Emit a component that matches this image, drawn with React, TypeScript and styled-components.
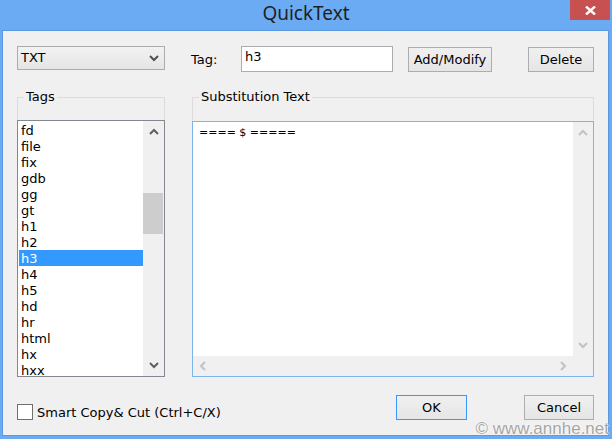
import { createGlobalStyle } from "styled-components";
import styled from "styled-components";

const GlobalStyle = createGlobalStyle`
  html, body {
    margin: 0;
    padding: 0;
    background: #ffffff;
  }
  * {
    box-sizing: border-box;
  }
`;

const uiFont = `"DejaVu Sans", Verdana, sans-serif`;

const Frame = styled.div`
  position: relative;
  width: 612px;
  height: 439px;
  background: #6babf4;
  display: flex;
  flex-direction: column;
  overflow: hidden;
`;

const TitleBar = styled.div`
  height: 30px;
  display: grid;
  grid-template-columns: 1fr auto 1fr;
  align-items: start;
`;

const Title = styled.div`
  grid-column: 2;
  font-family: "Noto Sans", "Open Sans", sans-serif;
  font-size: 19px;
  line-height: 26px;
  color: #1f1f1f;
`;

const CloseButton = styled.div`
  grid-column: 3;
  justify-self: end;
  width: 40px;
  height: 20px;
  margin-right: 2px;
  background: #c75050;
  display: flex;
  align-items: center;
  justify-content: center;
`;

const Client = styled.div`
  flex: 1;
  margin: 0 3px 3px 2px;
  border: 1px solid #5a98e2;
  background: #f0f0f0;
  padding: 15px 14px 0 14px;
  display: flex;
  flex-direction: column;
  font-family: ${uiFont};
  font-size: 13px;
  color: #000;
`;

const TopRow = styled.div`
  height: 26px;
  display: flex;
  align-items: center;
`;

const Combo = styled.div`
  width: 148px;
  height: 24px;
  align-self: flex-start;
  border: 1px solid #acacac;
  background: linear-gradient(#f2f2f2, #e5e5e5);
  display: flex;
  align-items: center;
  justify-content: space-between;
  padding: 0 5px 0 3px;
  line-height: 16px;
`;

const FieldLabel = styled.div`
  width: 50px;
  margin-left: 26px;
`;

const TextInput = styled.div`
  width: 152px;
  height: 26px;
  border: 1px solid #abadb3;
  background: #fff;
  padding: 2px 0 0 3px;
  line-height: 16px;
`;

const Button = styled.div<{ $w: number; $gap: number; $default?: boolean }>`
  width: ${(p) => p.$w}px;
  height: 25px;
  margin-left: ${(p) => p.$gap}px;
  border: 1px solid ${(p) => (p.$default ? "#3399ff" : "#adadad")};
  background: linear-gradient(#f0f0f0, #e5e5e5);
  display: flex;
  align-items: center;
  justify-content: center;
  padding-top: 1px;
  line-height: 16px;
`;

const GroupsRow = styled.div`
  margin-top: 17px;
  display: flex;
`;

const Group = styled.fieldset<{ $w: number; $gap?: number }>`
  width: ${(p) => p.$w}px;
  margin: 0 0 0 ${(p) => p.$gap ?? 0}px;
  padding: 0;
  min-width: 0;
  border: 1px solid #dcdcdc;
  border-bottom: none;
`;

const Legend = styled.legend`
  margin-left: 6px;
  padding: 0 2px;
  line-height: 16px;
`;

const ListBox = styled.div`
  margin: 15px -1px 0 -1px;
  height: 257px;
  border: 1px solid #828790;
  background: #fff;
  display: flex;
`;

const Items = styled.div`
  flex: 1;
  padding: 1px 0 0 1px;
  overflow: hidden;
`;

const Item = styled.div<{ $selected?: boolean }>`
  height: 16px;
  line-height: 17px;
  padding-left: 2px;
  background: ${(p) => (p.$selected ? "#3399ff" : "transparent")};
  color: ${(p) => (p.$selected ? "#fff" : "#000")};
`;

const VScroll = styled.div<{ $w: number }>`
  width: ${(p) => p.$w}px;
  background: #f0f0f0;
  display: flex;
  flex-direction: column;
`;

const HScroll = styled.div`
  background: #f0f0f0;
  display: flex;
  justify-content: space-between;
`;

const Arrow = styled.div<{ $size: number }>`
  width: 100%;
  height: ${(p) => p.$size}px;
  display: flex;
  align-items: center;
  justify-content: center;
  flex: none;
`;

const HArrow = styled.div`
  width: 20px;
  height: 100%;
  display: flex;
  align-items: center;
  justify-content: center;
`;

const Track = styled.div`
  flex: 1;
`;

const Thumb = styled.div`
  margin: 50px 1px 0 0;
  height: 41px;
  background: #cdcdcd;
`;

const TextBox = styled.div`
  margin: 16px -1px 0 -1px;
  height: 256px;
  border: 1px solid #7eb4ea;
  background: #fff;
  display: grid;
  grid-template-columns: 1fr 20px;
  grid-template-rows: 1fr 20px;
`;

const TextContent = styled.div`
  padding: 3px 6px;
  font-size: 11px;
  line-height: 16px;
  white-space: pre;
`;

const Corner = styled.div`
  background: #f0f0f0;
`;

const BottomRow = styled.div`
  margin-top: 18px;
  display: flex;
  align-items: flex-start;
`;

const CheckRow = styled.div`
  margin-top: 9px;
  display: flex;
  align-items: center;
  gap: 4px;
`;

const CheckBox = styled.div`
  width: 16px;
  height: 16px;
  border: 1px solid #707070;
  background: #fff;
`;

const Spacer = styled.div`
  flex: 1;
`;

const Watermark = styled.div`
  position: absolute;
  right: 3px;
  bottom: 1px;
  font-family: "Liberation Sans", Arial, sans-serif;
  font-size: 17px;
  line-height: 18px;
  color: #a6a6a6;
  text-shadow: 0 0 2px #fff, 0 0 1px #fff;
`;

const Chevron = ({
  dir,
  color,
}: {
  dir: "up" | "down" | "left" | "right";
  color: string;
}) => {
  const pts: Record<string, string> = {
    up: "1,6 5,2 9,6",
    down: "1,2 5,6 9,2",
    left: "6,1 2,5 6,9",
    right: "2,1 6,5 2,9",
  };
  const vertical = dir === "up" || dir === "down";
  return (
    <svg
      width={vertical ? 10 : 8}
      height={vertical ? 8 : 10}
      viewBox={vertical ? "0 0 10 8" : "0 0 8 10"}
    >
      <polyline
        points={pts[dir]}
        fill="none"
        stroke={color}
        strokeWidth="2"
      />
    </svg>
  );
};

const tags = [
  "fd",
  "file",
  "fix",
  "gdb",
  "gg",
  "gt",
  "h1",
  "h2",
  "h3",
  "h4",
  "h5",
  "hd",
  "hr",
  "html",
  "hx",
  "hxx",
];

export default function App() {
  return (
    <>
      <GlobalStyle />
      <Frame>
        <TitleBar>
          <Title>QuickText</Title>
          <CloseButton>
            <svg width="11" height="9" viewBox="0 0 11 9">
              <path d="M1 0.5 L10 8.5 M10 0.5 L1 8.5" stroke="#fff" strokeWidth="2.4" />
            </svg>
          </CloseButton>
        </TitleBar>
        <Client>
          <TopRow>
            <Combo>
              <span>TXT</span>
              <Chevron dir="down" color="#505050" />
            </Combo>
            <FieldLabel>Tag:</FieldLabel>
            <TextInput>h3</TextInput>
            <Button $w={84} $gap={15}>
              Add/Modify
            </Button>
            <Button $w={66} $gap={36}>
              Delete
            </Button>
          </TopRow>
          <GroupsRow>
            <Group $w={148}>
              <Legend>Tags</Legend>
              <ListBox>
                <Items>
                  {tags.map((t) => (
                    <Item key={t} $selected={t === "h3"}>
                      {t}
                    </Item>
                  ))}
                </Items>
                <VScroll $w={21}>
                  <Arrow $size={22}>
                    <Chevron dir="up" color="#606060" />
                  </Arrow>
                  <Track>
                    <Thumb />
                  </Track>
                  <Arrow $size={22}>
                    <Chevron dir="down" color="#606060" />
                  </Arrow>
                </VScroll>
              </ListBox>
            </Group>
            <Group $w={402} $gap={27}>
              <Legend>Substitution Text</Legend>
              <TextBox>
                <TextContent>==== $ =====</TextContent>
                <VScroll $w={20}>
                  <Arrow $size={22}>
                    <Chevron dir="up" color="#c2c2c2" />
                  </Arrow>
                  <Track />
                  <Arrow $size={22}>
                    <Chevron dir="down" color="#c2c2c2" />
                  </Arrow>
                </VScroll>
                <HScroll>
                  <HArrow>
                    <Chevron dir="left" color="#c2c2c2" />
                  </HArrow>
                  <HArrow>
                    <Chevron dir="right" color="#c2c2c2" />
                  </HArrow>
                </HScroll>
                <Corner />
              </TextBox>
            </Group>
          </GroupsRow>
          <BottomRow>
            <CheckRow>
              <CheckBox />
              <span>Smart Copy&amp; Cut (Ctrl+C/X)</span>
            </CheckRow>
            <Spacer />
            <Button $w={71} $gap={0} $default>
              OK
            </Button>
            <Button $w={70} $gap={57}>
              Cancel
            </Button>
          </BottomRow>
        </Client>
        <Watermark>© www.annhe.net</Watermark>
      </Frame>
    </>
  );
}
